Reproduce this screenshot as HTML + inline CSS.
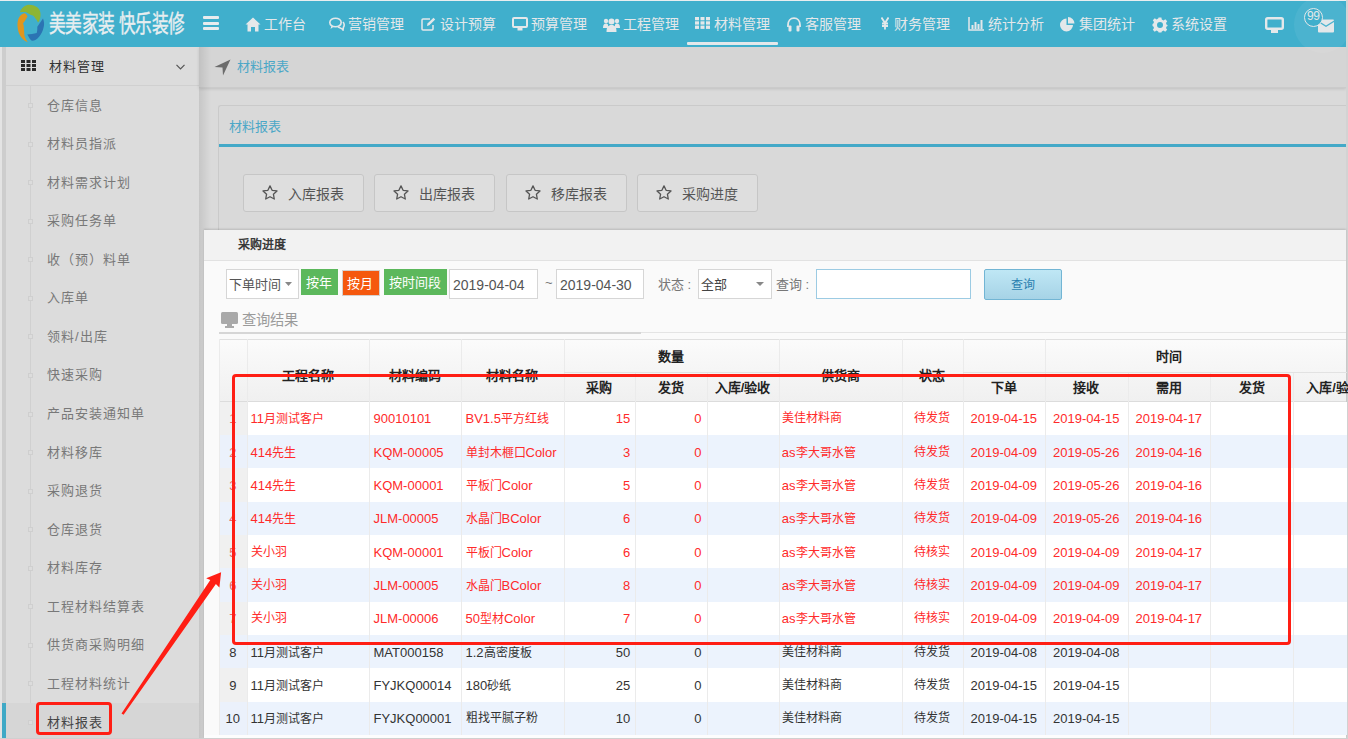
<!DOCTYPE html><html lang="zh-CN"><head><meta charset="utf-8"><style>
*{box-sizing:border-box;margin:0;padding:0}
html,body{width:1348px;height:739px;overflow:hidden;background:#d9d9d9;font-family:"Liberation Sans",sans-serif;}
.a{position:absolute}
svg{display:block}
.t{position:absolute;white-space:nowrap;line-height:1}
#hdr{left:0;top:0;width:1348px;height:47px;background:#40afcc;border-top:1px solid #e9eef0}
.nav{color:#e4e8ea;font-size:14px}
.sb{color:#787878;font-size:13px;letter-spacing:1px}
.sq{position:absolute;left:28px;width:5px;height:5px;border:1px solid #cfcfcf;background:#dcdcdc}
.btn{position:absolute;top:174px;height:38px;border:1px solid #c6c6c6;border-radius:3px;background:#dedede;}
.fb{position:absolute;top:269px;height:30px;border:1px solid #d6d6d6;background:#fff}
td,th{}
.cell{position:absolute;white-space:nowrap;line-height:1;font-size:12px}
.n{font-size:13px}
.hd{position:absolute;white-space:nowrap;line-height:1;font-size:13px;font-weight:bold;color:#222}
</style></head><body>
<div class="a" style="left:0;top:47px;width:2px;height:692px;background:#e3e3e3"></div>
<div class="a" style="left:2px;top:47px;width:4px;height:692px;background:#cdcdcd"></div>
<div class="a" style="left:6px;top:47px;width:193px;height:692px;background:#dcdcdc"></div>
<div class="a" style="left:6px;top:85px;width:193px;height:1px;background:#d0d0d0"></div>
<div class="a" style="left:30px;top:86px;width:1px;height:653px;background:#d0d0d0"></div>
<div class="a" style="left:6px;top:703px;width:193px;height:36px;background:#d6d6d6"></div>
<div class="a" style="left:2px;top:703px;width:4px;height:36px;background:#3fa9c6"></div>
<div class="a" style="left:21px;top:60px;width:15px;height:11px;">
<svg width="15" height="11" viewBox="0 0 15 11"><g fill="#2b2b2b">
<rect x="0" y="0" width="4" height="3"/><rect x="5.5" y="0" width="4" height="3"/><rect x="11" y="0" width="4" height="3"/>
<rect x="0" y="4" width="4" height="3"/><rect x="5.5" y="4" width="4" height="3"/><rect x="11" y="4" width="4" height="3"/>
<rect x="0" y="8" width="4" height="3"/><rect x="5.5" y="8" width="4" height="3"/><rect x="11" y="8" width="4" height="3"/>
</g></svg></div>
<div class="t" style="left:49px;top:60px;font-size:13px;letter-spacing:1px;color:#333">材料管理</div>
<svg class="a" style="left:176px;top:64px" width="9" height="6" viewBox="0 0 9 6"><path d="M0.5 0.8 L4.5 4.8 L8.5 0.8" fill="none" stroke="#555" stroke-width="1.2"/></svg>
<div class="sq" style="top:103.0px"></div>
<div class="t sb" style="left:47px;top:98.5px;color:#787878">仓库信息</div>
<div class="sq" style="top:141.6px"></div>
<div class="t sb" style="left:47px;top:137.1px;color:#787878">材料员指派</div>
<div class="sq" style="top:180.1px"></div>
<div class="t sb" style="left:47px;top:175.6px;color:#787878">材料需求计划</div>
<div class="sq" style="top:218.7px"></div>
<div class="t sb" style="left:47px;top:214.2px;color:#787878">采购任务单</div>
<div class="sq" style="top:257.2px"></div>
<div class="t sb" style="left:47px;top:252.7px;color:#787878">收（预）料单</div>
<div class="sq" style="top:295.8px"></div>
<div class="t sb" style="left:47px;top:291.3px;color:#787878">入库单</div>
<div class="sq" style="top:334.4px"></div>
<div class="t sb" style="left:47px;top:329.9px;color:#787878">领料/出库</div>
<div class="sq" style="top:372.9px"></div>
<div class="t sb" style="left:47px;top:368.4px;color:#787878">快速采购</div>
<div class="sq" style="top:411.5px"></div>
<div class="t sb" style="left:47px;top:407.0px;color:#787878">产品安装通知单</div>
<div class="sq" style="top:450.0px"></div>
<div class="t sb" style="left:47px;top:445.5px;color:#787878">材料移库</div>
<div class="sq" style="top:488.6px"></div>
<div class="t sb" style="left:47px;top:484.1px;color:#787878">采购退货</div>
<div class="sq" style="top:527.2px"></div>
<div class="t sb" style="left:47px;top:522.7px;color:#787878">仓库退货</div>
<div class="sq" style="top:565.7px"></div>
<div class="t sb" style="left:47px;top:561.2px;color:#787878">材料库存</div>
<div class="sq" style="top:604.3px"></div>
<div class="t sb" style="left:47px;top:599.8px;color:#787878">工程材料结算表</div>
<div class="sq" style="top:642.8px"></div>
<div class="t sb" style="left:47px;top:638.3px;color:#787878">供货商采购明细</div>
<div class="sq" style="top:681.4px"></div>
<div class="t sb" style="left:47px;top:676.9px;color:#787878">工程材料统计</div>
<div class="sq" style="top:720.0px"></div>
<div class="t sb" style="left:47px;top:715.5px;color:#444">材料报表</div>
<div class="a" style="left:199px;top:88px;width:1147px;height:651px;background:#dadada"></div>
<div class="a" style="left:199px;top:47px;width:1147px;height:41px;background:#d5d5d5;border-bottom:1px solid #cbcbcb;box-shadow:0 1px 3px rgba(0,0,0,0.12)"></div>
<svg class="a" style="left:214px;top:59px" width="17" height="17" viewBox="0 0 17 17"><path d="M0.5 8 L16.5 0.5 L9 16.5 L8.5 8.5 Z" fill="#6c6c6c"/></svg>
<div class="t" style="left:237px;top:60px;font-size:13px;color:#4ba7c7">材料报表</div>
<div class="a" style="left:218px;top:105px;width:1128px;height:200px;background:#d9d9d9;border:1px solid #cacaca;border-right:none;border-radius:3px 0 0 0"></div>
<div class="t" style="left:229px;top:120px;font-size:13px;color:#4ba7c7">材料报表</div>
<div class="a" style="left:219px;top:144px;width:1127px;height:3px;background:#43a9c8"></div>
<div class="btn" style="left:243px;width:121px"></div>
<div class="a" style="left:262px;top:185px"><svg width="16" height="15" viewBox="0 0 16 15"><path d="M8 0.9 L10.1 5.3 L15 5.9 L11.4 9.2 L12.3 14 L8 11.7 L3.7 14 L4.6 9.2 L1 5.9 L5.9 5.3 Z" fill="none" stroke="#555" stroke-width="1.3" stroke-linejoin="round"/></svg></div>
<div class="t" style="left:288px;top:187px;font-size:14px;color:#555">入库报表</div>
<div class="btn" style="left:374px;width:121px"></div>
<div class="a" style="left:393px;top:185px"><svg width="16" height="15" viewBox="0 0 16 15"><path d="M8 0.9 L10.1 5.3 L15 5.9 L11.4 9.2 L12.3 14 L8 11.7 L3.7 14 L4.6 9.2 L1 5.9 L5.9 5.3 Z" fill="none" stroke="#555" stroke-width="1.3" stroke-linejoin="round"/></svg></div>
<div class="t" style="left:419px;top:187px;font-size:14px;color:#555">出库报表</div>
<div class="btn" style="left:506px;width:121px"></div>
<div class="a" style="left:525px;top:185px"><svg width="16" height="15" viewBox="0 0 16 15"><path d="M8 0.9 L10.1 5.3 L15 5.9 L11.4 9.2 L12.3 14 L8 11.7 L3.7 14 L4.6 9.2 L1 5.9 L5.9 5.3 Z" fill="none" stroke="#555" stroke-width="1.3" stroke-linejoin="round"/></svg></div>
<div class="t" style="left:551px;top:187px;font-size:14px;color:#555">移库报表</div>
<div class="btn" style="left:637px;width:121px"></div>
<div class="a" style="left:656px;top:185px"><svg width="16" height="15" viewBox="0 0 16 15"><path d="M8 0.9 L10.1 5.3 L15 5.9 L11.4 9.2 L12.3 14 L8 11.7 L3.7 14 L4.6 9.2 L1 5.9 L5.9 5.3 Z" fill="none" stroke="#555" stroke-width="1.3" stroke-linejoin="round"/></svg></div>
<div class="t" style="left:682px;top:187px;font-size:14px;color:#555">采购进度</div>
<div class="a" style="left:199px;top:47px;width:12px;height:692px;background:linear-gradient(90deg,rgba(0,0,0,0.09),rgba(0,0,0,0))"></div>
<div class="a" style="left:1346px;top:0;width:2px;height:739px;background:#d3d3d3"></div>
<div id="hdr" class="a"></div>
<svg class="a" style="left:10px;top:0px" width="45" height="47" viewBox="0 0 45 47">
<path d="M9.9 12.1 C12 7 16 4.8 19.1 4.8 C26 4.8 31 9 30.5 15 C30.5 18 29.5 21 28 22.6 C27 20 26 19 25.4 18.4 C24 16 22.5 15 21 15 L15.9 12.1 Z" fill="#8db535"/>
<path d="M17.5 16.5 C16.5 13.5 14.5 13 13.7 13.4 C9 15 7 20 7.6 27 C8 34 12 40 17.8 42.3 C15 38 14 36 14.2 32 L13.7 25.4 L13 23.5 L15.3 20.3 Z" fill="#e0961e"/>
<path d="M33 18.4 C34 21 34.5 24 33.7 27 C32 35 27 40.7 22.3 40.7 C20 40.7 18.5 36 17.2 34.6 C20 34 24 34 26.7 33 C27.5 30 27.3 28 27.3 26.7 Z" fill="#2b74b3"/>
</svg>
<div class="t" style="left:49px;top:13px;font-size:23.5px;color:#e8eef0;-webkit-text-stroke:0.4px #e8eef0;transform:scaleX(0.71);transform-origin:0 0;letter-spacing:0px">美美家装 快乐装修</div>
<div class="a" style="left:203px;top:16px;width:16px;height:3px;background:#e8ecee;border-radius:1px"></div>
<div class="a" style="left:203px;top:21.5px;width:16px;height:3px;background:#e8ecee;border-radius:1px"></div>
<div class="a" style="left:203px;top:27px;width:16px;height:3px;background:#e8ecee;border-radius:1px"></div>
<div class="a" style="left:245px;top:17px;line-height:0"><svg width="16" height="15" viewBox="0 0 16 15"><path d="M8 0.5 L15.5 7.5 L13.5 7.5 L13.5 14.5 L10 14.5 L10 10 L6 10 L6 14.5 L2.5 14.5 L2.5 7.5 L0.5 7.5 Z" fill="#e4e8ea"/></svg></div>
<div class="t nav" style="left:264px;top:17px">工作台</div>
<div class="a" style="left:329px;top:17px;line-height:0"><svg width="16" height="14" viewBox="0 0 16 14"><ellipse cx="6.5" cy="5.5" rx="5.7" ry="4.3" fill="none" stroke="#e4e8ea" stroke-width="1.6"/><path d="M9 10 C11 11 13 11 14 13 L14.5 10 C15.5 9 15.5 6.5 14 5" fill="none" stroke="#e4e8ea" stroke-width="1.6"/><path d="M2.5 8.5 L1.5 12 L5 9.5Z" fill="#e4e8ea"/></svg></div>
<div class="t nav" style="left:348px;top:17px">营销管理</div>
<div class="a" style="left:421px;top:17px;line-height:0"><svg width="15" height="14" viewBox="0 0 15 14"><path d="M9 2 L2 2 Q1 2 1 3 L1 12 Q1 13 2 13 L11 13 Q12 13 12 12 L12 8" fill="none" stroke="#e4e8ea" stroke-width="1.5"/><path d="M6 9 L6.5 6.5 L12.5 0.8 L14.2 2.5 L8.3 8.3 Z" fill="#e4e8ea"/></svg></div>
<div class="t nav" style="left:440px;top:17px">设计预算</div>
<div class="a" style="left:512px;top:17px;line-height:0"><svg width="16" height="14" viewBox="0 0 16 14"><rect x="1" y="1" width="14" height="9" rx="1" fill="none" stroke="#e4e8ea" stroke-width="2"/><rect x="5.5" y="11" width="5" height="2.5" fill="#e4e8ea"/></svg></div>
<div class="t nav" style="left:531px;top:17px">预算管理</div>
<div class="a" style="left:603px;top:17px;line-height:0"><svg width="17" height="15" viewBox="0 0 17 15"><circle cx="3" cy="4" r="2.2" fill="#e4e8ea"/><circle cx="14" cy="4" r="2.2" fill="#e4e8ea"/><circle cx="8.5" cy="4.5" r="3" fill="#e4e8ea"/><path d="M0 11 C0 7 2 6.5 3 6.5 C4 6.5 5 7 5 8 L5 11Z" fill="#e4e8ea"/><path d="M17 11 C17 7 15 6.5 14 6.5 C13 6.5 12 7 12 8 L12 11Z" fill="#e4e8ea"/><path d="M3.5 15 C3.5 10 5 8 8.5 8 C12 8 13.5 10 13.5 15Z" fill="#e4e8ea"/></svg></div>
<div class="t nav" style="left:623px;top:17px">工程管理</div>
<div class="a" style="left:695px;top:17px;line-height:0"><svg width="15" height="12" viewBox="0 0 15 12"><g fill="#e4e8ea"><rect x="0" y="0" width="4" height="3.3"/><rect x="5.5" y="0" width="4" height="3.3"/><rect x="11" y="0" width="4" height="3.3"/><rect x="0" y="4.3" width="4" height="3.3"/><rect x="5.5" y="4.3" width="4" height="3.3"/><rect x="11" y="4.3" width="4" height="3.3"/><rect x="0" y="8.6" width="4" height="3.3"/><rect x="5.5" y="8.6" width="4" height="3.3"/><rect x="11" y="8.6" width="4" height="3.3"/></g></svg></div>
<div class="t nav" style="left:714px;top:17px">材料管理</div>
<div class="a" style="left:786px;top:17px;line-height:0"><svg width="16" height="15" viewBox="0 0 16 15"><path d="M2 10 L2 8 C2 4 4.5 1.2 8 1.2 C11.5 1.2 14 4 14 8 L14 10" fill="none" stroke="#e4e8ea" stroke-width="1.8"/><rect x="2.5" y="8.5" width="3" height="6" rx="1" fill="#e4e8ea"/><rect x="10.5" y="8.5" width="3" height="6" rx="1" fill="#e4e8ea"/></svg></div>
<div class="t nav" style="left:805px;top:17px">客服管理</div>
<div class="a" style="left:881px;top:17px;line-height:0"><svg width="8" height="13" viewBox="0 0 8 13"><path d="M0.5 0.5 L4 6 L7.5 0.5 M4 6 L4 12.5 M1 6.5 L7 6.5 M1 9 L7 9" fill="none" stroke="#e4e8ea" stroke-width="1.8"/></svg></div>
<div class="t nav" style="left:894px;top:17px">财务管理</div>
<div class="a" style="left:968px;top:17px;line-height:0"><svg width="16" height="14" viewBox="0 0 16 14"><path d="M1 0 L1 13 L16 13" fill="none" stroke="#e4e8ea" stroke-width="1.5"/><rect x="3.5" y="8" width="2" height="4" fill="#e4e8ea"/><rect x="6.5" y="5" width="2" height="7" fill="#e4e8ea"/><rect x="9.5" y="7" width="2" height="5" fill="#e4e8ea"/><rect x="12.5" y="3" width="2" height="9" fill="#e4e8ea"/></svg></div>
<div class="t nav" style="left:988px;top:17px">统计分析</div>
<div class="a" style="left:1060px;top:17px;line-height:0"><svg width="15" height="15" viewBox="0 0 15 15"><path d="M6.5 1.5 L6.5 8 L13 8 A6.5 6.5 0 1 1 6.5 1.5Z" fill="#e4e8ea"/><path d="M8 0 A6.5 6.5 0 0 1 14.5 6.5 L8 6.5Z" fill="#e4e8ea"/></svg></div>
<div class="t nav" style="left:1079px;top:17px">集团统计</div>
<div class="a" style="left:1152px;top:17px;line-height:0"><svg width="16" height="16" viewBox="0 0 16 16"><path d="M6.6 0.5 H9.4 L9.8 2.6 L11.5 3.4 L13.3 2.2 L15.2 4.2 L14 6 L14.6 7.7 L15.5 8 V9 L14.6 9.4 L14 11 L15.2 12.8 L13.2 14.8 L11.5 13.6 L9.8 14.4 L9.4 15.5 H6.6 L6.2 14.4 L4.5 13.6 L2.7 14.8 L0.8 12.8 L2 11 L1.4 9.4 L0.5 9 V7 L1.4 6.6 L2 5 L0.8 3.2 L2.8 1.2 L4.5 2.4 L6.2 1.6 Z M8 5 A3 3 0 1 0 8 11 A3 3 0 1 0 8 5Z" fill="#e4e8ea" fill-rule="evenodd"/></svg></div>
<div class="t nav" style="left:1171px;top:17px">系统设置</div>
<div class="a" style="left:687px;top:42px;width:91px;height:3px;background:#e4e8ea;border-radius:1px"></div>
<svg class="a" style="left:1265px;top:17px" width="19" height="16" viewBox="0 0 19 16"><rect x="1.2" y="1.2" width="16.6" height="10.6" rx="1.5" fill="none" stroke="#e4e8ea" stroke-width="2.4"/><rect x="6" y="13" width="7" height="3" fill="#e4e8ea"/></svg>
<div class="a" style="left:1294px;top:-4px;width:57px;height:57px;border-radius:50%;background:rgba(255,255,255,0.06)"></div>
<div class="a" style="left:1346px;top:0;width:2px;height:47px;background:#d3d3d3"></div>
<svg class="a" style="left:1317px;top:19px" width="18" height="14" viewBox="0 0 18 14"><path d="M1 3 L9 8 L17 3 L17 12.5 Q17 13.5 16 13.5 L2 13.5 Q1 13.5 1 12.5Z" fill="#e4e8ea"/><path d="M1 1.5 Q1 0.5 2 0.5 L16 0.5 Q17 0.5 17 1.5 L9 6.5Z" fill="#e4e8ea"/></svg>
<div class="a" style="left:1304px;top:8px;width:19px;height:19px;border-radius:50%;border:1px solid #e4e8ea;background:#40afcc"></div>
<div class="t" style="left:1307px;top:10px;font-size:12px;color:#e4e8ea;letter-spacing:-0.5px">99</div>
<div class="a" style="left:204px;top:230px;width:1142px;height:509px;background:#fafafa;box-shadow:0 -1px 2px rgba(0,0,0,0.15)"></div>
<div class="a" style="left:204px;top:230px;width:1142px;height:31px;background:#f2f2f2;border-bottom:1px solid #e2e2e2"></div>
<div class="t" style="left:238px;top:239px;font-size:12px;font-weight:bold;color:#3a3a3a">采购进度</div>
<div class="fb" style="left:226px;width:73px"></div>
<div class="t" style="left:229px;top:278px;font-size:13px;color:#555">下单时间</div>
<svg class="a" style="left:285px;top:282px" width="7" height="4" viewBox="0 0 7 4"><path d="M0 0 L7 0 L3.5 4Z" fill="#888"/></svg>
<div class="a" style="left:301px;top:269px;width:37px;height:26px;background:#5cb85c"></div>
<div class="t" style="left:306px;top:276px;font-size:13px;color:#fff">按年</div>
<div class="a" style="left:342px;top:270px;width:38px;height:26px;background:#f5580e;border:1px solid #d8d0cc"></div>
<div class="t" style="left:347px;top:277px;font-size:13px;color:#fff">按月</div>
<div class="a" style="left:384px;top:269px;width:63px;height:26px;background:#5cb85c"></div>
<div class="t" style="left:389px;top:276px;font-size:13px;color:#fff">按时间段</div>
<div class="fb" style="left:449px;width:89px"></div>
<div class="t" style="left:453px;top:278px;font-size:14px;color:#555">2019-04-04</div>
<div class="t" style="left:545px;top:276px;font-size:13px;color:#777">~</div>
<div class="fb" style="left:556px;width:88px"></div>
<div class="t" style="left:560px;top:278px;font-size:14px;color:#555">2019-04-30</div>
<div class="t" style="left:658px;top:278px;font-size:13px;color:#777">状态 :</div>
<div class="fb" style="left:698px;width:74px"></div>
<div class="t" style="left:701px;top:278px;font-size:13px;color:#444">全部</div>
<svg class="a" style="left:756px;top:282px" width="8" height="4" viewBox="0 0 8 4"><path d="M0 0 L8 0 L4 4Z" fill="#888"/></svg>
<div class="t" style="left:776px;top:278px;font-size:13px;color:#777">查询 :</div>
<div class="fb" style="left:816px;width:155px;border-color:#9ccbe3"></div>
<div class="a" style="left:984px;top:269px;width:78px;height:31px;background:linear-gradient(#bfe7f5,#a6d3e6);border:1px solid #72b5d4;border-radius:2px"></div>
<div class="t" style="left:1011px;top:279px;font-size:12px;color:#2a7fb0">查询</div>
<svg class="a" style="left:221px;top:312px" width="17" height="16" viewBox="0 0 17 16"><rect x="0" y="0" width="17" height="12" rx="1.5" fill="#a9a9a9"/><rect x="6" y="12" width="5" height="2" fill="#a9a9a9"/><rect x="4" y="14" width="9" height="2" fill="#a9a9a9"/></svg>
<div class="t" style="left:242px;top:313px;font-size:14.3px;color:#9a9a9a">查询结果</div>
<div class="a" style="left:219px;top:332px;width:1127px;height:1px;background:#e4e4e4"></div>
<div class="a" style="left:219px;top:332px;width:422px;height:2px;background:#d6d6d6"></div>
<div class="a" style="left:219px;top:339px;width:1127px;height:400px;background:#fff"></div>
<div class="a" style="left:219px;top:339px;width:1127px;height:62.5px;background:linear-gradient(#fbfbfb,#f0f0f0);border-top:1px solid #e0e0e0;border-bottom:1px solid #dcdcdc"></div>
<div class="a" style="left:246.5px;top:401.50px;width:1100px;height:33.34px;background:#fff"></div>
<div class="a" style="left:219px;top:401.50px;width:27.5px;height:33.34px;background:#f0f0f0"></div>
<div class="a" style="left:246.5px;top:434.84px;width:1100px;height:33.34px;background:#ecf3fd"></div>
<div class="a" style="left:219px;top:434.84px;width:27.5px;height:33.34px;background:#ebf1fb"></div>
<div class="a" style="left:246.5px;top:468.18px;width:1100px;height:33.34px;background:#fff"></div>
<div class="a" style="left:219px;top:468.18px;width:27.5px;height:33.34px;background:#f0f0f0"></div>
<div class="a" style="left:246.5px;top:501.52px;width:1100px;height:33.34px;background:#ecf3fd"></div>
<div class="a" style="left:219px;top:501.52px;width:27.5px;height:33.34px;background:#ebf1fb"></div>
<div class="a" style="left:246.5px;top:534.86px;width:1100px;height:33.34px;background:#fff"></div>
<div class="a" style="left:219px;top:534.86px;width:27.5px;height:33.34px;background:#f0f0f0"></div>
<div class="a" style="left:246.5px;top:568.20px;width:1100px;height:33.34px;background:#ecf3fd"></div>
<div class="a" style="left:219px;top:568.20px;width:27.5px;height:33.34px;background:#ebf1fb"></div>
<div class="a" style="left:246.5px;top:601.54px;width:1100px;height:33.34px;background:#fff"></div>
<div class="a" style="left:219px;top:601.54px;width:27.5px;height:33.34px;background:#f0f0f0"></div>
<div class="a" style="left:246.5px;top:634.88px;width:1100px;height:33.34px;background:#ecf3fd"></div>
<div class="a" style="left:219px;top:634.88px;width:27.5px;height:33.34px;background:#ebf1fb"></div>
<div class="a" style="left:246.5px;top:668.22px;width:1100px;height:33.34px;background:#fff"></div>
<div class="a" style="left:219px;top:668.22px;width:27.5px;height:33.34px;background:#f0f0f0"></div>
<div class="a" style="left:246.5px;top:701.56px;width:1100px;height:33.34px;background:#ecf3fd"></div>
<div class="a" style="left:219px;top:701.56px;width:27.5px;height:33.34px;background:#ebf1fb"></div>
<div class="a" style="left:219.0px;top:339px;width:1px;height:396px;background:#ebebeb"></div>
<div class="a" style="left:246.5px;top:339px;width:1px;height:396px;background:#ebebeb"></div>
<div class="a" style="left:369.3px;top:339px;width:1px;height:396px;background:#ebebeb"></div>
<div class="a" style="left:461.3px;top:339px;width:1px;height:396px;background:#ebebeb"></div>
<div class="a" style="left:563.5px;top:339px;width:1px;height:396px;background:#ebebeb"></div>
<div class="a" style="left:635.4px;top:371.6px;width:1px;height:363.4px;background:#ebebeb"></div>
<div class="a" style="left:706.7px;top:371.6px;width:1px;height:363.4px;background:#ebebeb"></div>
<div class="a" style="left:778.5px;top:339px;width:1px;height:396px;background:#ebebeb"></div>
<div class="a" style="left:901.7px;top:339px;width:1px;height:396px;background:#ebebeb"></div>
<div class="a" style="left:962.6px;top:339px;width:1px;height:396px;background:#ebebeb"></div>
<div class="a" style="left:1045.0px;top:339px;width:1px;height:396px;background:#ebebeb"></div>
<div class="a" style="left:1127.5px;top:371.6px;width:1px;height:363.4px;background:#ebebeb"></div>
<div class="a" style="left:1210.2px;top:371.6px;width:1px;height:363.4px;background:#ebebeb"></div>
<div class="a" style="left:1293.3px;top:371.6px;width:1px;height:363.4px;background:#ebebeb"></div>
<div class="a" style="left:563.5px;top:371.6px;width:215px;height:1px;background:#e2e2e2"></div>
<div class="a" style="left:962.6px;top:371.6px;width:384px;height:1px;background:#e2e2e2"></div>
<div class="hd" style="left:246.5px;width:122.80000000000001px;top:368.8px;text-align:center">工程名称</div>
<div class="hd" style="left:369.3px;width:92.0px;top:368.8px;text-align:center">材料编码</div>
<div class="hd" style="left:461.3px;width:102.19999999999999px;top:368.8px;text-align:center">材料名称</div>
<div class="hd" style="left:563.5px;width:215.0px;top:349.5px;text-align:center">数量</div>
<div class="hd" style="left:563.5px;width:71.89999999999998px;top:381px;text-align:center">采购</div>
<div class="hd" style="left:635.4px;width:71.30000000000007px;top:381px;text-align:center">发货</div>
<div class="hd" style="left:706.7px;width:71.79999999999995px;top:381px;text-align:center">入库/验收</div>
<div class="hd" style="left:778.5px;width:123.20000000000005px;top:368.8px;text-align:center">供货商</div>
<div class="hd" style="left:901.7px;width:60.89999999999998px;top:368.8px;text-align:center">状态</div>
<div class="hd" style="left:962.6px;width:412.4px;top:349.5px;text-align:center">时间</div>
<div class="hd" style="left:962.6px;width:82.39999999999998px;top:381px;text-align:center">下单</div>
<div class="hd" style="left:1045px;width:82.5px;top:381px;text-align:center">接收</div>
<div class="hd" style="left:1127.5px;width:82.70000000000005px;top:381px;text-align:center">需用</div>
<div class="hd" style="left:1210.2px;width:83.09999999999991px;top:381px;text-align:center">发货</div>
<div class="hd" style="left:1293.3px;width:81.70000000000005px;top:381px;text-align:center">入库/验收</div>
<div class="cell" style="left:219px;width:27.5px;top:412.3px;text-align:center;color:#e86a6a;font-size:13px">1</div>
<div class="cell" style="left:250.5px;top:412.3px;color:#ff2a2a"><span class="n">11</span>月测试客户</div>
<div class="cell" style="left:373.5px;top:412.3px;color:#ff2a2a"><span class="n">90010101</span></div>
<div class="cell" style="left:465.5px;top:412.3px;color:#ff2a2a"><span class="n">BV1.5</span>平方红线</div>
<div class="cell n" style="left:563.5px;width:66.8px;top:412.3px;text-align:right;color:#ff2a2a">15</div>
<div class="cell n" style="left:635.4px;width:66px;top:412.3px;text-align:right;color:#ff2a2a">0</div>
<div class="cell" style="left:781.8px;top:412.3px;color:#ff2a2a">美佳材料商</div>
<div class="cell" style="left:901.7px;width:61px;top:412.3px;text-align:center;color:#ff2a2a">待发货</div>
<div class="cell n" style="left:962.6px;width:82.4px;top:412.3px;text-align:center;color:#ff2a2a">2019-04-15</div>
<div class="cell n" style="left:1045px;width:82.5px;top:412.3px;text-align:center;color:#ff2a2a">2019-04-15</div>
<div class="cell n" style="left:1127.5px;width:82.7px;top:412.3px;text-align:center;color:#ff2a2a">2019-04-17</div>
<div class="cell" style="left:219px;width:27.5px;top:445.6px;text-align:center;color:#e86a6a;font-size:13px">2</div>
<div class="cell" style="left:250.5px;top:445.6px;color:#ff2a2a"><span class="n">414</span>先生</div>
<div class="cell" style="left:373.5px;top:445.6px;color:#ff2a2a"><span class="n">KQM-00005</span></div>
<div class="cell" style="left:465.5px;top:445.6px;color:#ff2a2a">单封木榧口<span class="n">Color</span></div>
<div class="cell n" style="left:563.5px;width:66.8px;top:445.6px;text-align:right;color:#ff2a2a">3</div>
<div class="cell n" style="left:635.4px;width:66px;top:445.6px;text-align:right;color:#ff2a2a">0</div>
<div class="cell" style="left:781.8px;top:445.6px;color:#ff2a2a"><span class="n">as</span>李大哥水管</div>
<div class="cell" style="left:901.7px;width:61px;top:445.6px;text-align:center;color:#ff2a2a">待发货</div>
<div class="cell n" style="left:962.6px;width:82.4px;top:445.6px;text-align:center;color:#ff2a2a">2019-04-09</div>
<div class="cell n" style="left:1045px;width:82.5px;top:445.6px;text-align:center;color:#ff2a2a">2019-05-26</div>
<div class="cell n" style="left:1127.5px;width:82.7px;top:445.6px;text-align:center;color:#ff2a2a">2019-04-16</div>
<div class="cell" style="left:219px;width:27.5px;top:479.0px;text-align:center;color:#e86a6a;font-size:13px">3</div>
<div class="cell" style="left:250.5px;top:479.0px;color:#ff2a2a"><span class="n">414</span>先生</div>
<div class="cell" style="left:373.5px;top:479.0px;color:#ff2a2a"><span class="n">KQM-00001</span></div>
<div class="cell" style="left:465.5px;top:479.0px;color:#ff2a2a">平板门<span class="n">Color</span></div>
<div class="cell n" style="left:563.5px;width:66.8px;top:479.0px;text-align:right;color:#ff2a2a">5</div>
<div class="cell n" style="left:635.4px;width:66px;top:479.0px;text-align:right;color:#ff2a2a">0</div>
<div class="cell" style="left:781.8px;top:479.0px;color:#ff2a2a"><span class="n">as</span>李大哥水管</div>
<div class="cell" style="left:901.7px;width:61px;top:479.0px;text-align:center;color:#ff2a2a">待发货</div>
<div class="cell n" style="left:962.6px;width:82.4px;top:479.0px;text-align:center;color:#ff2a2a">2019-04-09</div>
<div class="cell n" style="left:1045px;width:82.5px;top:479.0px;text-align:center;color:#ff2a2a">2019-05-26</div>
<div class="cell n" style="left:1127.5px;width:82.7px;top:479.0px;text-align:center;color:#ff2a2a">2019-04-16</div>
<div class="cell" style="left:219px;width:27.5px;top:512.3px;text-align:center;color:#e86a6a;font-size:13px">4</div>
<div class="cell" style="left:250.5px;top:512.3px;color:#ff2a2a"><span class="n">414</span>先生</div>
<div class="cell" style="left:373.5px;top:512.3px;color:#ff2a2a"><span class="n">JLM-00005</span></div>
<div class="cell" style="left:465.5px;top:512.3px;color:#ff2a2a">水晶门<span class="n">BColor</span></div>
<div class="cell n" style="left:563.5px;width:66.8px;top:512.3px;text-align:right;color:#ff2a2a">6</div>
<div class="cell n" style="left:635.4px;width:66px;top:512.3px;text-align:right;color:#ff2a2a">0</div>
<div class="cell" style="left:781.8px;top:512.3px;color:#ff2a2a"><span class="n">as</span>李大哥水管</div>
<div class="cell" style="left:901.7px;width:61px;top:512.3px;text-align:center;color:#ff2a2a">待发货</div>
<div class="cell n" style="left:962.6px;width:82.4px;top:512.3px;text-align:center;color:#ff2a2a">2019-04-09</div>
<div class="cell n" style="left:1045px;width:82.5px;top:512.3px;text-align:center;color:#ff2a2a">2019-05-26</div>
<div class="cell n" style="left:1127.5px;width:82.7px;top:512.3px;text-align:center;color:#ff2a2a">2019-04-16</div>
<div class="cell" style="left:219px;width:27.5px;top:545.6px;text-align:center;color:#e86a6a;font-size:13px">5</div>
<div class="cell" style="left:250.5px;top:545.6px;color:#ff2a2a">关小羽</div>
<div class="cell" style="left:373.5px;top:545.6px;color:#ff2a2a"><span class="n">KQM-00001</span></div>
<div class="cell" style="left:465.5px;top:545.6px;color:#ff2a2a">平板门<span class="n">Color</span></div>
<div class="cell n" style="left:563.5px;width:66.8px;top:545.6px;text-align:right;color:#ff2a2a">6</div>
<div class="cell n" style="left:635.4px;width:66px;top:545.6px;text-align:right;color:#ff2a2a">0</div>
<div class="cell" style="left:781.8px;top:545.6px;color:#ff2a2a"><span class="n">as</span>李大哥水管</div>
<div class="cell" style="left:901.7px;width:61px;top:545.6px;text-align:center;color:#ff2a2a">待核实</div>
<div class="cell n" style="left:962.6px;width:82.4px;top:545.6px;text-align:center;color:#ff2a2a">2019-04-09</div>
<div class="cell n" style="left:1045px;width:82.5px;top:545.6px;text-align:center;color:#ff2a2a">2019-04-09</div>
<div class="cell n" style="left:1127.5px;width:82.7px;top:545.6px;text-align:center;color:#ff2a2a">2019-04-17</div>
<div class="cell" style="left:219px;width:27.5px;top:579.0px;text-align:center;color:#e86a6a;font-size:13px">6</div>
<div class="cell" style="left:250.5px;top:579.0px;color:#ff2a2a">关小羽</div>
<div class="cell" style="left:373.5px;top:579.0px;color:#ff2a2a"><span class="n">JLM-00005</span></div>
<div class="cell" style="left:465.5px;top:579.0px;color:#ff2a2a">水晶门<span class="n">BColor</span></div>
<div class="cell n" style="left:563.5px;width:66.8px;top:579.0px;text-align:right;color:#ff2a2a">8</div>
<div class="cell n" style="left:635.4px;width:66px;top:579.0px;text-align:right;color:#ff2a2a">0</div>
<div class="cell" style="left:781.8px;top:579.0px;color:#ff2a2a"><span class="n">as</span>李大哥水管</div>
<div class="cell" style="left:901.7px;width:61px;top:579.0px;text-align:center;color:#ff2a2a">待核实</div>
<div class="cell n" style="left:962.6px;width:82.4px;top:579.0px;text-align:center;color:#ff2a2a">2019-04-09</div>
<div class="cell n" style="left:1045px;width:82.5px;top:579.0px;text-align:center;color:#ff2a2a">2019-04-09</div>
<div class="cell n" style="left:1127.5px;width:82.7px;top:579.0px;text-align:center;color:#ff2a2a">2019-04-17</div>
<div class="cell" style="left:219px;width:27.5px;top:612.3px;text-align:center;color:#e86a6a;font-size:13px">7</div>
<div class="cell" style="left:250.5px;top:612.3px;color:#ff2a2a">关小羽</div>
<div class="cell" style="left:373.5px;top:612.3px;color:#ff2a2a"><span class="n">JLM-00006</span></div>
<div class="cell" style="left:465.5px;top:612.3px;color:#ff2a2a"><span class="n">50</span>型材<span class="n">Color</span></div>
<div class="cell n" style="left:563.5px;width:66.8px;top:612.3px;text-align:right;color:#ff2a2a">7</div>
<div class="cell n" style="left:635.4px;width:66px;top:612.3px;text-align:right;color:#ff2a2a">0</div>
<div class="cell" style="left:781.8px;top:612.3px;color:#ff2a2a"><span class="n">as</span>李大哥水管</div>
<div class="cell" style="left:901.7px;width:61px;top:612.3px;text-align:center;color:#ff2a2a">待核实</div>
<div class="cell n" style="left:962.6px;width:82.4px;top:612.3px;text-align:center;color:#ff2a2a">2019-04-09</div>
<div class="cell n" style="left:1045px;width:82.5px;top:612.3px;text-align:center;color:#ff2a2a">2019-04-09</div>
<div class="cell n" style="left:1127.5px;width:82.7px;top:612.3px;text-align:center;color:#ff2a2a">2019-04-17</div>
<div class="cell" style="left:219px;width:27.5px;top:645.6px;text-align:center;color:#333;font-size:13px">8</div>
<div class="cell" style="left:250.5px;top:645.6px;color:#333"><span class="n">11</span>月测试客户</div>
<div class="cell" style="left:373.5px;top:645.6px;color:#333"><span class="n">MAT000158</span></div>
<div class="cell" style="left:465.5px;top:645.6px;color:#333"><span class="n">1.2</span>高密度板</div>
<div class="cell n" style="left:563.5px;width:66.8px;top:645.6px;text-align:right;color:#333">50</div>
<div class="cell n" style="left:635.4px;width:66px;top:645.6px;text-align:right;color:#333">0</div>
<div class="cell" style="left:781.8px;top:645.6px;color:#333">美佳材料商</div>
<div class="cell" style="left:901.7px;width:61px;top:645.6px;text-align:center;color:#333">待发货</div>
<div class="cell n" style="left:962.6px;width:82.4px;top:645.6px;text-align:center;color:#333">2019-04-08</div>
<div class="cell n" style="left:1045px;width:82.5px;top:645.6px;text-align:center;color:#333">2019-04-08</div>
<div class="cell n" style="left:1127.5px;width:82.7px;top:645.6px;text-align:center;color:#333"></div>
<div class="cell" style="left:219px;width:27.5px;top:679.0px;text-align:center;color:#333;font-size:13px">9</div>
<div class="cell" style="left:250.5px;top:679.0px;color:#333"><span class="n">11</span>月测试客户</div>
<div class="cell" style="left:373.5px;top:679.0px;color:#333"><span class="n">FYJKQ00014</span></div>
<div class="cell" style="left:465.5px;top:679.0px;color:#333"><span class="n">180</span>砂纸</div>
<div class="cell n" style="left:563.5px;width:66.8px;top:679.0px;text-align:right;color:#333">25</div>
<div class="cell n" style="left:635.4px;width:66px;top:679.0px;text-align:right;color:#333">0</div>
<div class="cell" style="left:781.8px;top:679.0px;color:#333">美佳材料商</div>
<div class="cell" style="left:901.7px;width:61px;top:679.0px;text-align:center;color:#333">待发货</div>
<div class="cell n" style="left:962.6px;width:82.4px;top:679.0px;text-align:center;color:#333">2019-04-15</div>
<div class="cell n" style="left:1045px;width:82.5px;top:679.0px;text-align:center;color:#333">2019-04-15</div>
<div class="cell n" style="left:1127.5px;width:82.7px;top:679.0px;text-align:center;color:#333"></div>
<div class="cell" style="left:219px;width:27.5px;top:712.3px;text-align:center;color:#333;font-size:13px">10</div>
<div class="cell" style="left:250.5px;top:712.3px;color:#333"><span class="n">11</span>月测试客户</div>
<div class="cell" style="left:373.5px;top:712.3px;color:#333"><span class="n">FYJKQ00001</span></div>
<div class="cell" style="left:465.5px;top:712.3px;color:#333">粗找平腻子粉</div>
<div class="cell n" style="left:563.5px;width:66.8px;top:712.3px;text-align:right;color:#333">10</div>
<div class="cell n" style="left:635.4px;width:66px;top:712.3px;text-align:right;color:#333">0</div>
<div class="cell" style="left:781.8px;top:712.3px;color:#333">美佳材料商</div>
<div class="cell" style="left:901.7px;width:61px;top:712.3px;text-align:center;color:#333">待发货</div>
<div class="cell n" style="left:962.6px;width:82.4px;top:712.3px;text-align:center;color:#333">2019-04-15</div>
<div class="cell n" style="left:1045px;width:82.5px;top:712.3px;text-align:center;color:#333">2019-04-15</div>
<div class="cell n" style="left:1127.5px;width:82.7px;top:712.3px;text-align:center;color:#333"></div>
<div class="a" style="left:204px;top:735px;width:1142px;height:3px;background:#fdfdfd"></div>
<div class="a" style="left:0;top:738px;width:1348px;height:1px;background:#d0d0d0"></div>
<div class="a" style="left:232.1px;top:373.5px;width:1059.4px;height:271.9px;border:3.8px solid #ff1e14;border-radius:4px"></div>
<div class="a" style="left:36.3px;top:702.4px;width:76px;height:33px;border:3.3px solid #ff1e14;border-radius:4px"></div>
<svg class="a" style="left:0;top:0" width="1348" height="739" viewBox="0 0 1348 739"><path d="M121.5 713.4 L210.3 579.9 L206.2 578.3 L221.1 572.2 L219.4 587.4 L215.9 584.0 L123.6 714.7 Z" fill="#ff1e14"/></svg>
</body></html>
